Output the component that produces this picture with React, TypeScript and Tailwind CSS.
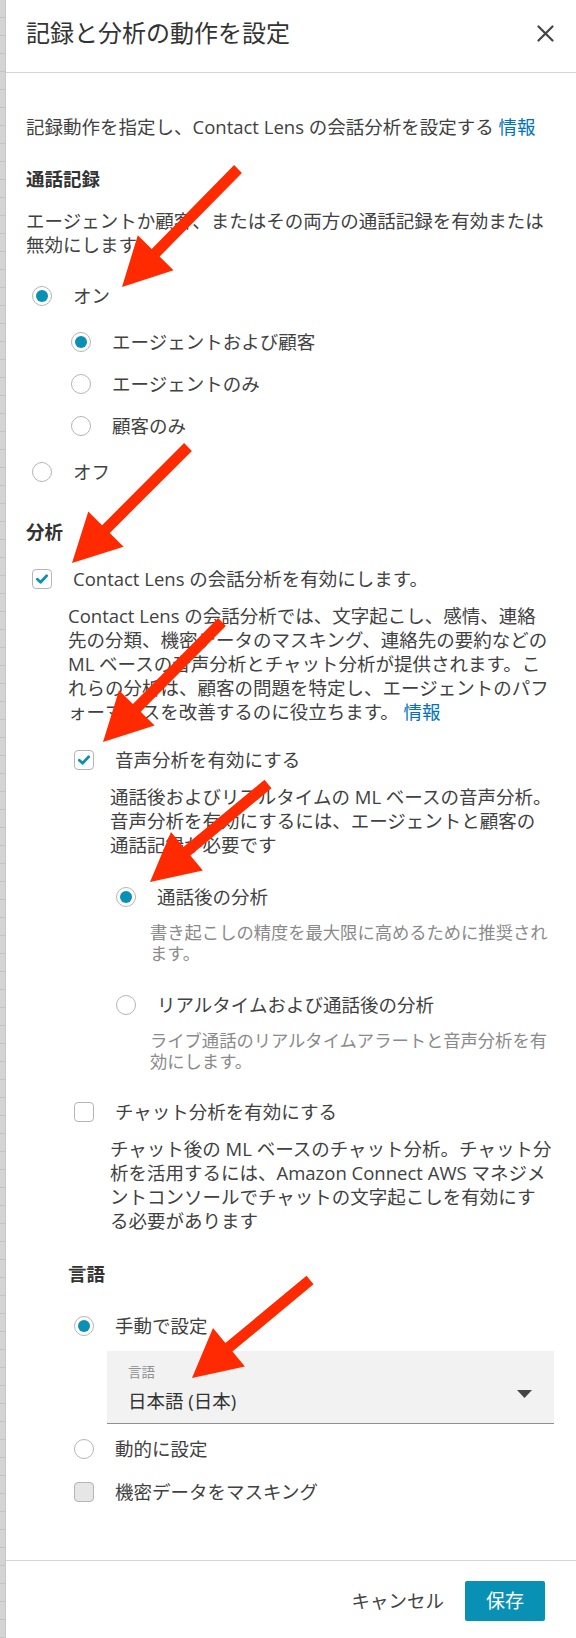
import type { ReactNode } from 'react'

// red annotation arrows: [tailX, tailY, tipX, tipY]
const ARROWS: [number, number, number, number][] = [
  [238, 169, 122, 287],
  [188, 447, 72, 563],
  [222, 622, 103, 742],
  [268, 784, 150, 882],
  [310, 1280, 192, 1378],
]

function arrowPoints([tx, ty, px, py]: [number, number, number, number]) {
  const len = Math.hypot(px - tx, py - ty)
  const ux = (px - tx) / len
  const uy = (py - ty) / len
  const nx = -uy
  const ny = ux
  const head = 48
  const half = 25
  const shaft = 5.5
  const bx = px - ux * head
  const by = py - uy * head
  const pts = [
    [tx + nx * shaft, ty + ny * shaft],
    [bx + nx * shaft, by + ny * shaft],
    [bx + nx * half, by + ny * half],
    [px, py],
    [bx - nx * half, by - ny * half],
    [bx - nx * shaft, by - ny * shaft],
    [tx - nx * shaft, ty - ny * shaft],
  ]
  return pts.map(([x, y]) => `${x.toFixed(1)},${y.toFixed(1)}`).join(' ')
}

function Radio({ checked = false }: { checked?: boolean }) {
  return (
    <span className="flex h-[20px] w-[20px] shrink-0 items-center justify-center rounded-full border border-[#b5b5b5] bg-white">
      {checked && <span className="h-[12px] w-[12px] rounded-full bg-[#0891b5]" />}
    </span>
  )
}

function Checkbox({ checked = false, muted = false }: { checked?: boolean; muted?: boolean }) {
  return (
    <span
      className={`flex h-[20px] w-[20px] shrink-0 items-center justify-center rounded-[4px] border border-[#b5b5b5] ${
        muted ? 'bg-[#e6e6e6]' : 'bg-white'
      }`}
    >
      {checked && (
        <svg width="20" height="20" viewBox="0 0 20 20">
          <path
            d="M4.8 10.2 L8.4 13.6 L15.2 6.4"
            fill="none"
            stroke="#0891b5"
            strokeWidth="3"
            strokeLinecap="round"
            strokeLinejoin="round"
          />
        </svg>
      )}
    </span>
  )
}

function Row({ control, children, className = '' }: { control: ReactNode; children: ReactNode; className?: string }) {
  return (
    <div className={`flex h-[24px] items-center gap-[21px] pl-[6px] ${className}`}>
      {control}
      <span className="leading-[24px]">{children}</span>
    </div>
  )
}

export default function App() {
  return (
    <div className="relative flex min-h-[1638px] w-full bg-white font-['Open_Sans','Noto_Sans_CJK_JP',sans-serif] text-[18.5px] text-[#414141]">
      {/* background page strip */}
      <div className="w-[6px] shrink-0 border-r border-[#c8c8c8] bg-[#d4d4d4] bg-[image:repeating-linear-gradient(to_bottom,#d4d4d4_0px,#d4d4d4_17px,#c4c4c4_17px,#c4c4c4_18px)]" />

      <div className="flex min-w-0 flex-1 flex-col">
        {/* Header */}
        <div className="flex h-[73px] items-start justify-between border-b border-[#d5d5d5] pl-[20px] pr-[22px] pt-[17px]">
          <h2 className="text-[24px] leading-[32px] text-[#333]">記録と分析の動作を設定</h2>
          <div className="flex h-[32px] items-center">
            <svg width="17" height="17" viewBox="0 0 17 17">
              <path d="M1.5 1.5 L15.5 15.5 M15.5 1.5 L1.5 15.5" stroke="#444" strokeWidth="2.2" strokeLinecap="round" />
            </svg>
          </div>
        </div>

        {/* Body */}
        <div className="flex flex-col pl-[20px] pr-[8px] pt-[42px]">
          <p className="leading-[24px]">
            記録動作を指定し、Contact Lens の会話分析を設定する <a className="text-[#0073bb]">情報</a>
          </p>

          <h3 className="mt-[28px] font-bold leading-[24px] text-[#333]">通話記録</h3>
          <p className="mt-[18px] leading-[24px]">
            エージェントか顧客、またはその両方の通話記録を有効または
            <br />
            無効にします
          </p>

          <Row className="mt-[27px]" control={<Radio checked />}>
            オン
          </Row>
          <div className="mt-[22px] flex flex-col gap-[18px] pl-[39px]">
            <Row control={<Radio checked />}>エージェントおよび顧客</Row>
            <Row control={<Radio />}>エージェントのみ</Row>
            <Row control={<Radio />}>顧客のみ</Row>
          </div>
          <Row className="mt-[22px]" control={<Radio />}>
            オフ
          </Row>

          <h3 className="mt-[36px] font-bold leading-[24px] text-[#333]">分析</h3>
          <Row className="mt-[23px]" control={<Checkbox checked />}>
            Contact Lens の会話分析を有効にします。
          </Row>
          <p className="mt-[13px] pl-[42px] leading-[24px]">
            Contact Lens の会話分析では、文字起こし、感情、連絡
            <br />
            先の分類、機密データのマスキング、連絡先の要約などの
            <br />
            ML ベースの音声分析とチャット分析が提供されます。こ
            <br />
            れらの分析は、顧客の問題を特定し、エージェントのパフ
            <br />
            ォーマンスを改善するのに役立ちます。 <a className="text-[#0073bb]">情報</a>
          </p>

          <div className="flex flex-col pl-[42px]">
            <Row className="mt-[24px]" control={<Checkbox checked />}>
              音声分析を有効にする
            </Row>
            <p className="mt-[13px] pl-[42px] leading-[24px]">
              通話後およびリアルタイムの ML ベースの音声分析。
              <br />
              音声分析を有効にするには、エージェントと顧客の
              <br />
              通話記録が必要です
            </p>

            <div className="flex flex-col pl-[42px]">
              <Row className="mt-[28px]" control={<Radio checked />}>
                通話後の分析
              </Row>
              <p className="mt-[12.5px] pl-[40px] text-[17.3px] leading-[21px] text-[#8a8a8a]">
                書き起こしの精度を最大限に高めるために推奨され
                <br />
                ます。
              </p>
              <Row className="mt-[29.5px]" control={<Radio />}>
                リアルタイムおよび通話後の分析
              </Row>
              <p className="mt-[12.5px] pl-[40px] text-[17.3px] leading-[21px] text-[#8a8a8a]">
                ライブ通話のリアルタイムアラートと音声分析を有
                <br />
                効にします。
              </p>
            </div>

            <Row className="mt-[28.5px]" control={<Checkbox />}>
              チャット分析を有効にする
            </Row>
            <p className="mt-[13px] pl-[42px] leading-[24px]">
              チャット後の ML ベースのチャット分析。チャット分
              <br />
              析を活用するには、Amazon Connect AWS マネジメ
              <br />
              ントコンソールでチャットの文字起こしを有効にす
              <br />
              る必要があります
            </p>

            <h3 className="mt-[29px] font-bold leading-[24px] text-[#333]">言語</h3>
            <Row className="mt-[28px]" control={<Radio checked />}>
              手動で設定
            </Row>
            <div className="ml-[39px] mt-[13px] flex h-[73px] w-[447px] items-start justify-between border-b border-[#8f8f8f] bg-[#f2f2f2] pl-[21px] pr-[22px] pt-[13px]">
              <div className="flex flex-col">
                <span className="text-[13.5px] leading-[16px] text-[#8f8f8f]">言語</span>
                <span className="mt-[9px] leading-[24px] text-[#333]">日本語 (日本)</span>
              </div>
              <svg className="self-center" width="15" height="8" viewBox="0 0 15 8">
                <polygon points="0,0 15,0 7.5,8" fill="#444" />
              </svg>
            </div>
            <Row className="mt-[13px]" control={<Radio />}>
              動的に設定
            </Row>
            <Row className="mt-[19px]" control={<Checkbox muted />}>
              機密データをマスキング
            </Row>
          </div>
        </div>

        {/* Footer */}
        <div className="mt-[56px] flex items-center justify-end gap-[21px] border-t border-[#d5d5d5] pb-[16px] pr-[31px] pt-[20px]">
          <button className="leading-[24px] text-[#444]">キャンセル</button>
          <button className="flex h-[40px] w-[80px] items-center justify-center rounded-[2px] bg-[#0891b5] text-[19px] text-white">
            保存
          </button>
        </div>
      </div>

      {/* annotation arrows */}
      <svg className="pointer-events-none absolute left-0 top-0" width="576" height="1638" viewBox="0 0 576 1638">
        {ARROWS.map((a, i) => (
          <polygon key={i} points={arrowPoints(a)} fill="#ff2a00" />
        ))}
      </svg>
    </div>
  )
}
